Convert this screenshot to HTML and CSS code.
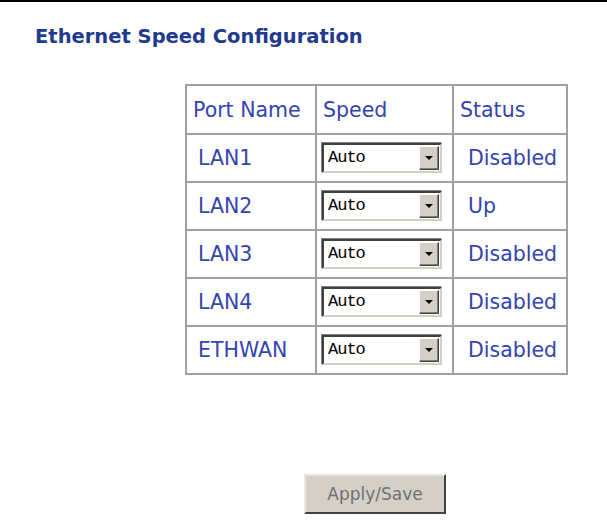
FILE: index.html
```html
<html lang="en">
<head>
	<meta charset="UTF-8">
	<title>Ethernet Speed Configuration</title>
	<link rel="stylesheet" href="styles.css">
</head>
<body>
	<div class="topline"></div>
	<h1 class="title">Ethernet Speed Configuration</h1>
	<table class="ports">
		<tr>
			<th class="c1">Port Name</th>
			<th class="c2">Speed</th>
			<th class="c3">Status</th>
		</tr>
		<tr>
			<td class="name">LAN1</td>
			<td><div class="sel"><span class="val">Auto</span><span class="arrow"><i></i></span></div></td>
			<td class="stat">Disabled</td>
		</tr>
		<tr>
			<td class="name">LAN2</td>
			<td><div class="sel"><span class="val">Auto</span><span class="arrow"><i></i></span></div></td>
			<td class="stat">Up</td>
		</tr>
		<tr>
			<td class="name">LAN3</td>
			<td><div class="sel"><span class="val">Auto</span><span class="arrow"><i></i></span></div></td>
			<td class="stat">Disabled</td>
		</tr>
		<tr>
			<td class="name">LAN4</td>
			<td><div class="sel"><span class="val">Auto</span><span class="arrow"><i></i></span></div></td>
			<td class="stat">Disabled</td>
		</tr>
		<tr>
			<td class="name">ETHWAN</td>
			<td><div class="sel"><span class="val">Auto</span><span class="arrow"><i></i></span></div></td>
			<td class="stat">Disabled</td>
		</tr>
	</table>
	<div class="actions">
		<button class="save">Apply/Save</button>
	</div>
</body>
</html>
```

FILE: styles.css
```css
*{
	margin: 0;
	padding: 0;
}
body{
	background: #fff;
	font-family: "DejaVu Sans", Verdana, sans-serif;
}
.topline{
	height: 2px;
	background: #000;
}
.title{
	font-size: 19.5px;
	font-weight: bold;
	color: #1f3a8f;
	padding: 22px 0 0 35px;
	height: 29px;
	line-height: 26px;
}
.ports{
	margin: 31px 0 0 185px;
	border: 1px solid #a0a0a0;
	border-spacing: 0;
}
.ports th,
.ports td{
	border: 1px solid #a0a0a0;
	height: 48px;
	color: #3344b0;
	font-size: 20.5px;
	font-weight: normal;
	text-align: left;
	padding: 0;
}
.ports th{
	height: 49px;
	padding-left: 6px;
}
.c1{ width: 122px; }
.c2{ width: 129px; }
.c3{ width: 106px; }
.ports td.name{
	padding-left: 11px;
}
.ports td.stat{
	padding-left: 14px;
}
.ports td:nth-child(2){
	padding-left: 5px;
}
.sel{
	display: flex;
	width: 116px;
	height: 26px;
	border: 2px solid;
	border-color: #404040 #d4d0c8 #d4d0c8 #404040;
	background: #fff;
	box-shadow: -1px -1px 0 #808080, 1px 1px 0 #fff;
}
.val{
	flex: 1;
	font-family: "Liberation Mono", "DejaVu Sans Mono", monospace;
	font-size: 17px;
	color: #000;
	line-height: 26px;
	padding-left: 4px;
	letter-spacing: -1px;
}
.arrow{
	width: 18px;
	margin: 1px;
	background: #d4d0c8;
	border: 1px solid;
	border-color: #fff #404040 #404040 #fff;
	box-shadow: inset -1px -1px 0 #808080;
	display: flex;
	align-items: center;
	justify-content: center;
}
.arrow i{
	width: 0;
	height: 0;
	border-left: 4px solid transparent;
	border-right: 4px solid transparent;
	border-top: 4px solid #000;
}
.actions{
	padding: 99px 0 0 304px;
}
.save{
	width: 142px;
	height: 40px;
	background: #d4d0c8;
	border: 2px solid;
	border-color: #e8e6e0 #404040 #404040 #e8e6e0;
	color: #707070;
	font-family: "DejaVu Sans", Verdana, sans-serif;
	font-size: 17px;
	cursor: pointer;
}
```
